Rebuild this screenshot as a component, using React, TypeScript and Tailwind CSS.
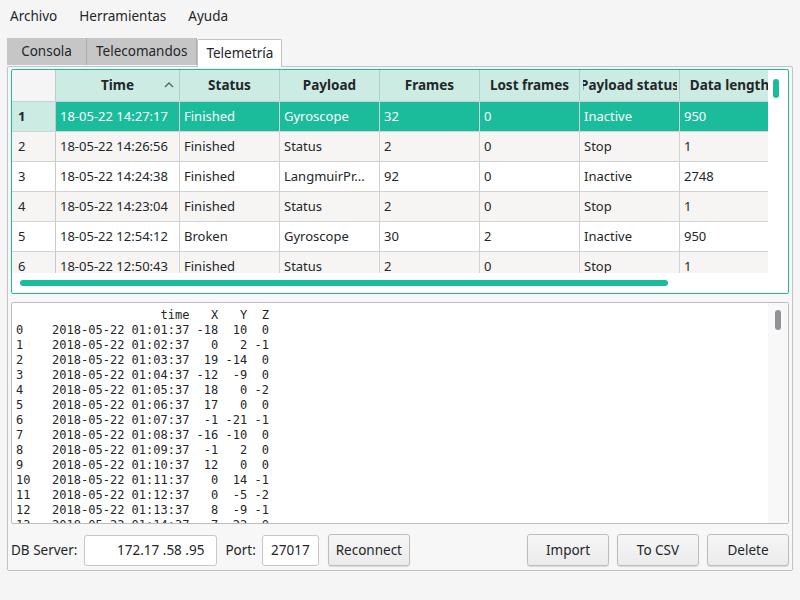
import React from "react";

const teal = "#1abc9c";

const columns = [
  { name: "Time", w: "w-[124px]" },
  { name: "Status", w: "w-[100px]" },
  { name: "Payload", w: "w-[100px]" },
  { name: "Frames", w: "w-[100px]" },
  { name: "Lost frames", w: "w-[100px]" },
  { name: "Payload status", w: "w-[100px]" },
  { name: "Data length", w: "w-[100px]" },
];

const rows = [
  ["18-05-22 14:27:17", "Finished", "Gyroscope", "32", "0", "Inactive", "950"],
  ["18-05-22 14:26:56", "Finished", "Status", "2", "0", "Stop", "1"],
  ["18-05-22 14:24:38", "Finished", "LangmuirPr...", "92", "0", "Inactive", "2748"],
  ["18-05-22 14:23:04", "Finished", "Status", "2", "0", "Stop", "1"],
  ["18-05-22 12:54:12", "Broken", "Gyroscope", "30", "2", "Inactive", "950"],
  ["18-05-22 12:50:43", "Finished", "Status", "2", "0", "Stop", "1"],
];

// pandas style dump of the gyroscope frame
const dump = [
  "                    time   X   Y  Z",
  "0    2018-05-22 01:01:37 -18  10  0",
  "1    2018-05-22 01:02:37   0   2 -1",
  "2    2018-05-22 01:03:37  19 -14  0",
  "3    2018-05-22 01:04:37 -12  -9  0",
  "4    2018-05-22 01:05:37  18   0 -2",
  "5    2018-05-22 01:06:37  17   0  0",
  "6    2018-05-22 01:07:37  -1 -21 -1",
  "7    2018-05-22 01:08:37 -16 -10  0",
  "8    2018-05-22 01:09:37  -1   2  0",
  "9    2018-05-22 01:10:37  12   0  0",
  "10   2018-05-22 01:11:37   0  14 -1",
  "11   2018-05-22 01:12:37   0  -5 -2",
  "12   2018-05-22 01:13:37   8  -9 -1",
  "13   2018-05-22 01:14:37   7 -22  0",
  "14   2018-05-22 01:15:37  -3   4  1",
];

function Button({ children }: { children: React.ReactNode }) {
  return (
    <button className="w-[82px] h-[32px] rounded-[3px] border border-[#bdbdbd] bg-gradient-to-b from-[#f6f6f6] to-[#ebebeb] shadow-[0_1px_1px_rgba(0,0,0,0.12)] text-[13.5px] text-[#232629]">
      {children}
    </button>
  );
}

function Tab({ label, active }: { label: string; active?: boolean }) {
  return (
    <div
      className={
        active
          ? "h-[28px] min-w-[84px] px-[8px] flex items-center justify-center bg-white border border-b-0 border-[#c2c2c2] rounded-t-[2px] relative top-[1px]"
          : "h-[27px] min-w-[80px] px-[9px] flex items-center justify-center bg-[#c6c6c6] border-r border-[#aeaeae]"
      }
    >
      {label}
    </div>
  );
}

export default function App() {
  return (
    <div
      className="w-[800px] h-[600px] bg-[#f5f5f5] text-[#232629] text-[13.5px] overflow-hidden"
      style={{ fontFamily: '"Noto Sans", "Open Sans", sans-serif' }}
    >
      {/* menu */}
      <div className="h-[38px] flex items-start pt-[6px] pl-[10px] gap-[22px]">
        <span>Archivo</span>
        <span>Herramientas</span>
        <span>Ayuda</span>
      </div>

      {/* tabs */}
      <div className="flex ml-[7px] relative z-10">
        <Tab label="Consola" />
        <Tab label="Telecomandos" />
        <Tab label="Telemetría" active />
      </div>

      <div className="mx-[7px] h-[505px] border border-[#c3c3c3] bg-[#f7f7f7] rounded-[2px] pt-[2px] px-[3px] flex flex-col">
        {/* table */}
        <div className="h-[225px] border border-[#1abc9c] rounded-[2px] bg-white flex overflow-hidden text-[13px]">
          <div className="w-[756px] flex flex-col">
            <div className="h-[203px] overflow-hidden">
              <div className="flex h-[32px] border-b border-[#b9d8d1] text-[13.5px]">
                <div className="w-[44px] shrink-0 bg-[#f5f5f5] border-r border-[#c8c8c8]" />
                {columns.map((c, i) => (
                  <div
                    key={c.name}
                    className={`${c.w} shrink-0 bg-[#cbebe3] border-r border-[#b4d0ca] font-bold flex items-center justify-center relative`}
                  >
                    <div className="w-[94px] flex justify-center overflow-hidden whitespace-nowrap">
                      <span>{c.name}</span>
                    </div>
                    {i === 0 && (
                      <svg className="absolute right-[5px] top-[11px]" width="10" height="7" viewBox="0 0 10 7">
                        <path d="M1 6 L5 2 L9 6" stroke="#5a5f64" strokeWidth="1.3" fill="none" />
                      </svg>
                    )}
                  </div>
                ))}
              </div>
              {rows.map((r, ri) => {
                const sel = ri === 0;
                const alt = ri % 2 === 1;
                return (
                  <div key={ri} className="flex h-[30px] border-b border-[#d2d2d2]">
                    <div
                      className={`w-[44px] shrink-0 border-r border-[#c8c8c8] flex items-center pl-[6px] ${
                        sel ? "bg-[#cbebe3] font-bold" : alt ? "bg-[#f6f5f4]" : "bg-white"
                      }`}
                    >
                      {ri + 1}
                    </div>
                    {r.map((v, ci) => (
                      <div
                        key={ci}
                        className={`${columns[ci].w} shrink-0 border-r border-[#d2d2d2] flex items-center pl-[4px] whitespace-nowrap overflow-hidden ${
                          sel ? "bg-[#1abc9c] text-white" : alt ? "bg-[#f6f5f4]" : "bg-white"
                        }`}
                      >
                        {v}
                      </div>
                    ))}
                  </div>
                );
              })}
            </div>
            <div className="flex-1 pl-[8px] pt-[7px]">
              <div className="w-[648px] h-[6px] rounded-full" style={{ background: teal }} />
            </div>
          </div>
          <div className="flex-1 flex justify-center pt-[9px] pr-[4px]">
            <div className="w-[6px] h-[19px] rounded-full bg-[#1abc9c]" />
          </div>
        </div>

        {/* dump */}
        <div className="mt-[8px] h-[222px] border border-[#bcbcbc] rounded-[2px] bg-white flex overflow-hidden">
          <pre
            className="flex-1 pl-[4px] pt-[5px] text-[12px] leading-[15px] text-[#232629] overflow-hidden"
            style={{ fontFamily: '"DejaVu Sans Mono", monospace' }}
          >
            {dump.join("\n")}
          </pre>
          <div className="w-[20px] bg-[#f8f8f8] flex justify-center pt-[7px]">
            <div className="w-[6px] h-[20px] rounded-full bg-[#8e9297]" />
          </div>
        </div>

        {/* connection bar */}
        <div className="mt-[10px] flex items-center">
          <span>DB Server:</span>
          <div className="ml-[7px] w-[133px] h-[31px] border border-[#c8c8c8] rounded-[3px] bg-white flex items-center justify-end pr-[12px]">
            172.17 .58 .95
          </div>
          <span className="ml-[8px]">Port:</span>
          <div className="ml-[6px] w-[57px] h-[31px] border border-[#c8c8c8] rounded-[3px] bg-white flex items-center justify-center">
            27017
          </div>
          <div className="ml-[9px]">
            <Button>Reconnect</Button>
          </div>
          <div className="ml-auto flex gap-[8px]">
            <Button>Import</Button>
            <Button>To CSV</Button>
            <Button>Delete</Button>
          </div>
        </div>
      </div>
    </div>
  );
}
